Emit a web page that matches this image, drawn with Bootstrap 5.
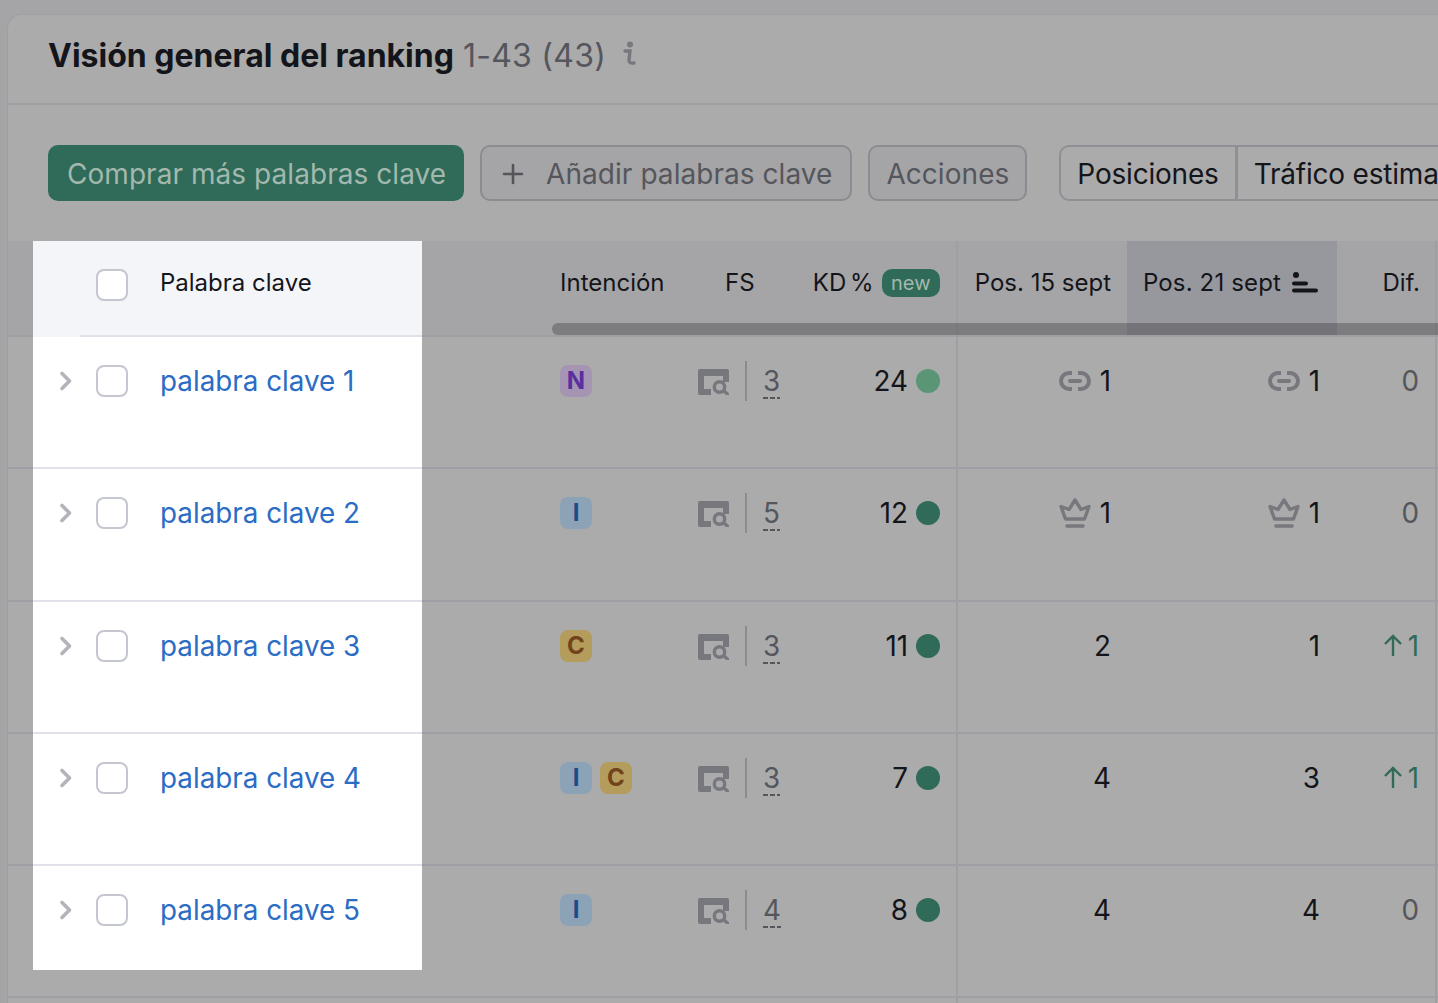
<!DOCTYPE html>
<html lang="es">
<head>
<meta charset="UTF-8">
<title>Visión general del ranking</title>
<link href="https://cdn.jsdelivr.net/npm/bootstrap@5.3.0/dist/css/bootstrap.min.css" rel="stylesheet">
<style>
    body {
        font-family: Inter, "Liberation Sans", sans-serif;
        background: #a5a5a7;
        overflow: hidden;
        height: 1003px;
        color: #14151a;
    }
    .page-wrap { padding: 14px 0 0 7px; width: 1600px; height: 1003px; overflow: hidden; position: relative; }
    .rank-card {
        background: #ababab;
        border: 0;
        border-left: 1px solid #9e9ea4;
        border-top: 1px solid #9e9ea4;
        border-radius: 14px 0 0 0;
    }
    .rank-head { height: 90px; padding: 0 0 7px 40px; border-bottom: 2px solid #9e9ea5; }
    .rank-title { font-size: 32px; font-weight: 700; }
    .rank-count { font-size: 32px; color: #55565c; font-weight: 400; margin-left: 9px; letter-spacing: .25px; }
    .info-mark { margin-left: 16px; margin-top: -4px; }
    .tool-bar { height: 136px; padding: 40px 0 0 40px; }
    .tool-btn {
        height: 56px;
        font-size: 28px;
        line-height: 1;
        letter-spacing: .05px;
        border-radius: 10px;
        padding: 2px 16px 0;
        color: #55565c;
        background: #a5a5a7;
        border: 2px solid #8b8c92;
        white-space: nowrap;
    }
    .tool-green { background: #2f6b58; border-color: #2f6b58; color: #a3b8ae; padding: 2px 16px 0 17px; }
    .tool-add { padding: 2px 18px 0 20px; }
    .tool-add svg { margin-right: 22px; }
    .tool-last { margin-right: 32px; }
    .tool-plain { background: transparent; color: #14151a; border-color: #8f9095; letter-spacing: -.2px; }
    .col-grid {
        display: grid;
        grid-template-columns: 544px 138px 110px 158px 169px 210px 100px 100px;
    }
    .head-row { height: 94px; background: #a5a5a7; font-size: 24px; position: relative; }
    .head-cell { display: flex; align-items: center; justify-content: flex-end; padding: 0 16px 11px 0; white-space: nowrap; }
    .head-active { background: #97989d; padding-right: 19px; letter-spacing: .15px; }
    .head-active svg { margin-left: 11px; }
    .head-intent { justify-content: flex-start; padding-left: 8px; }
    .head-fs { justify-content: flex-start; padding-left: 35px; }
    .head-dif { padding-right: 15px; }
    .kd-label { word-spacing: -3px; }
    .line-r { border-right: 2px solid #9e9ea5; }
    .scroll-thumb { position: absolute; left: 544px; right: 0; top: 82px; height: 12px; border-radius: 7px 0 0 7px; background: rgba(20, 21, 26, .28); }
    .new-tag {
        background: #2f6b58;
        color: #a3b8ae;
        font-size: 20px;
        line-height: 28px;
        border-radius: 10px;
        padding: 0 9.5px;
        margin-left: 8px;
    }
    .key-row { height: 132.25px; border-top: 2px solid #9e9ea5; font-size: 27.8px; line-height: 32px; }
    .key-cell { display: flex; align-items: flex-start; justify-content: flex-end; padding: 28px 16px 0 0; gap: 9px; }
    .pos-b { padding-right: 17px; }
    .intent-cell { justify-content: flex-start; padding-left: 8px; gap: 8px; }
    .intent-tag {
        width: 32px;
        height: 32px;
        border-radius: 8px;
        font-size: 24px;
        font-weight: 700;
        line-height: 32px;
        text-align: center;
    }
    .int-n { background: #a694b3; color: #5a2fa0; }
    .int-i { background: #8ca2b7; color: #1c4a8c; }
    .int-c { background: #b39c5c; color: #70431a; }
    .fs-cell { justify-content: flex-start; padding-left: 8px; gap: 0; }
    .fs-icon { width: 31px; height: 26px; margin-top: 4px; flex: none; }
    .fs-sep { width: 2px; height: 40px; background: #8b8c92; margin: -4px 16px 0; flex: none; }
    .fs-num {
        color: #55565c;
        height: 34px;
        background: repeating-linear-gradient(90deg, #55565c 0 5px, transparent 5px 7px) bottom / 100% 2px no-repeat;
    }
    .kd-dot { width: 24px; height: 24px; border-radius: 50%; background: #2f6b58; margin-top: 4px; margin-left: -1px; flex: none; }
    .kd-light { background: #5a9675; }
    .pos-icon { width: 32px; height: 32px; flex: none; }
    .dif-flat { color: #55565c; }
    .dif-up { color: #2f6b58; gap: 5px; }
    .spot-panel {
        position: absolute;
        left: 33px;
        top: 241px;
        width: 389px;
        height: 729px;
        background: #fff;
        overflow: hidden;
    }
    .spot-head { height: 94px; background: #f4f5f9; display: flex; align-items: center; padding: 0 0 11px 63px; font-size: 24px; position: relative; }
    .spot-head::after { content: ""; position: absolute; left: 47px; right: 0; bottom: -2px; height: 2px; background: #e0e1e9; }
    .spot-row { height: 132.25px; border-top: 2px solid #e0e1e9; display: flex; align-items: flex-start; padding-top: 28px; font-size: 27.8px; line-height: 32px; }
    .spot-head + .spot-row { border-top-color: #f4f5f9; }
    .spot-chev { width: 63px; height: 32px; flex: none; }
    .spot-check.form-check-input {
        width: 32px;
        height: 32px;
        margin: 0 32px 0 0;
        border: 2px solid #c4c7cf;
        border-radius: 8px;
        flex: none;
        float: none;
    }
    .spot-head .spot-check.form-check-input { margin-top: 4px; }
    .spot-link { color: #2b6cc4; text-decoration: none; white-space: nowrap; }
</style>
</head>
<body>
<svg width="0" height="0" class="position-absolute">
    <symbol id="ic-window" viewBox="0 0 31 26">
        <path fill="#77787d" d="M2 0h27a2 2 0 0 1 2 2v11h-6V7H6v13h7v6H2a2 2 0 0 1-2-2V2a2 2 0 0 1 2-2z"/>
        <circle cx="21.500" cy="18" r="5.200" fill="none" stroke="#77787d" stroke-width="3.400"/>
        <path d="M26 22l3.400 3" stroke="#77787d" stroke-width="3.400" stroke-linecap="round"/>
    </symbol>
    <symbol id="ic-link" viewBox="0 0 32 32">
        <path d="M13 8H10a8 8 0 0 0 0 16h3M19 8h3a8 8 0 0 1 0 16h-3" fill="none" stroke="#77787d" stroke-width="4"/>
        <path d="M11 16h10" stroke="#77787d" stroke-width="4" stroke-linecap="round"/>
    </symbol>
    <symbol id="ic-crown" viewBox="0 0 32 32">
        <path d="M16 3l6 9.500 8-3-4.500 12.500H6.500L2 9.500l8 3z" fill="none" stroke="#77787d" stroke-width="3.400" stroke-linejoin="round"/>
        <path d="M8 29h16" stroke="#77787d" stroke-width="3.600" stroke-linecap="round"/>
    </symbol>
    <symbol id="ic-chev" viewBox="0 0 63 32">
        <path d="M29 8.500l7.500 7.500-7.500 7.500" fill="none" stroke="#b2b3bb" stroke-width="3.600" stroke-linecap="round" stroke-linejoin="round"/>
    </symbol>
    <symbol id="ic-up" viewBox="0 0 20 24">
        <path d="M10 22V3M2 10l8-8 8 8" fill="none" stroke="#2f6b58" stroke-width="2.400"/>
    </symbol>
</svg>

<div class="page-wrap">
    <div class="card rank-card">
        <div class="rank-head d-flex align-items-center">
            <span class="rank-title">Visión general del ranking</span>
            <span class="rank-count">1-43 (43)</span>
            <svg class="info-mark" width="16" height="26" viewBox="0 0 16 26"><circle cx="8" cy="3.500" r="3" fill="#77787d"/><path d="M3 10h5l-1 9c-.2 2.500 1.500 3.500 5 3" fill="none" stroke="#77787d" stroke-width="3.400" stroke-linecap="round"/></svg>
        </div>
        <div class="tool-bar d-flex">
            <button class="btn tool-btn tool-green me-3">Comprar más palabras clave</button>
            <button class="btn tool-btn tool-add me-3 d-flex align-items-center">
                <svg width="22" height="22" viewBox="0 0 22 22"><path d="M11 2v18M2 11h18" stroke="#55565c" stroke-width="2.600" stroke-linecap="round"/></svg>Añadir palabras clave
            </button>
            <button class="btn tool-btn tool-last">Acciones</button>
            <div class="btn-group">
                <button class="btn tool-btn tool-plain">Posiciones</button>
                <button class="btn tool-btn tool-plain">Tráfico estimado</button>
            </div>
        </div>

        <div class="col-grid head-row">
            <div></div>
            <div class="head-cell head-intent">Intención</div>
            <div class="head-cell head-fs">FS</div>
            <div class="head-cell line-r"><span class="kd-label">KD %</span><span class="new-tag">new</span></div>
            <div class="head-cell">Pos. 15 sept</div>
            <div class="head-cell head-active">Pos. 21 sept
                <svg width="26" height="22" viewBox="0 0 26 22"><circle cx="4" cy="3" r="3" fill="#14151a"/><path d="M2 11.500h12M2 18.500h22" stroke="#14151a" stroke-width="4" stroke-linecap="round"/></svg>
            </div>
            <div class="head-cell head-dif line-r">Dif.</div>
            <div></div>
            <div class="scroll-thumb"></div>
        </div>

        <div class="col-grid key-row">
            <div></div>
            <div class="key-cell intent-cell"><span class="intent-tag int-n">N</span></div>
            <div class="key-cell fs-cell"><svg class="fs-icon"><use href="#ic-window"/></svg><span class="fs-sep"></span><span class="fs-num">3</span></div>
            <div class="key-cell line-r">24<span class="kd-dot kd-light"></span></div>
            <div class="key-cell"><svg class="pos-icon"><use href="#ic-link"/></svg>1</div>
            <div class="key-cell pos-b"><svg class="pos-icon"><use href="#ic-link"/></svg>1</div>
            <div class="key-cell line-r dif-flat">0</div>
            <div></div>
        </div>
        <div class="col-grid key-row">
            <div></div>
            <div class="key-cell intent-cell"><span class="intent-tag int-i">I</span></div>
            <div class="key-cell fs-cell"><svg class="fs-icon"><use href="#ic-window"/></svg><span class="fs-sep"></span><span class="fs-num">5</span></div>
            <div class="key-cell line-r">12<span class="kd-dot"></span></div>
            <div class="key-cell"><svg class="pos-icon"><use href="#ic-crown"/></svg>1</div>
            <div class="key-cell pos-b"><svg class="pos-icon"><use href="#ic-crown"/></svg>1</div>
            <div class="key-cell line-r dif-flat">0</div>
            <div></div>
        </div>
        <div class="col-grid key-row">
            <div></div>
            <div class="key-cell intent-cell"><span class="intent-tag int-c">C</span></div>
            <div class="key-cell fs-cell"><svg class="fs-icon"><use href="#ic-window"/></svg><span class="fs-sep"></span><span class="fs-num">3</span></div>
            <div class="key-cell line-r">11<span class="kd-dot"></span></div>
            <div class="key-cell">2</div>
            <div class="key-cell pos-b">1</div>
            <div class="key-cell line-r dif-up"><svg width="20" height="24" class="mt-1"><use href="#ic-up"/></svg>1</div>
            <div></div>
        </div>
        <div class="col-grid key-row">
            <div></div>
            <div class="key-cell intent-cell"><span class="intent-tag int-i">I</span><span class="intent-tag int-c">C</span></div>
            <div class="key-cell fs-cell"><svg class="fs-icon"><use href="#ic-window"/></svg><span class="fs-sep"></span><span class="fs-num">3</span></div>
            <div class="key-cell line-r">7<span class="kd-dot"></span></div>
            <div class="key-cell">4</div>
            <div class="key-cell pos-b">3</div>
            <div class="key-cell line-r dif-up"><svg width="20" height="24" class="mt-1"><use href="#ic-up"/></svg>1</div>
            <div></div>
        </div>
        <div class="col-grid key-row">
            <div></div>
            <div class="key-cell intent-cell"><span class="intent-tag int-i">I</span></div>
            <div class="key-cell fs-cell"><svg class="fs-icon"><use href="#ic-window"/></svg><span class="fs-sep"></span><span class="fs-num">4</span></div>
            <div class="key-cell line-r">8<span class="kd-dot"></span></div>
            <div class="key-cell">4</div>
            <div class="key-cell pos-b">4</div>
            <div class="key-cell line-r dif-flat">0</div>
            <div></div>
        </div>
        <div class="col-grid key-row">
            <div></div><div></div><div></div><div class="line-r"></div><div></div><div></div><div class="line-r"></div><div></div>
        </div>
    </div>

    <div class="spot-panel">
        <div class="spot-head"><input class="form-check-input spot-check" type="checkbox"><span>Palabra clave</span></div>
        <div class="spot-row"><svg class="spot-chev"><use href="#ic-chev"/></svg><input class="form-check-input spot-check" type="checkbox"><a class="spot-link" href="#">palabra clave 1</a></div>
        <div class="spot-row"><svg class="spot-chev"><use href="#ic-chev"/></svg><input class="form-check-input spot-check" type="checkbox"><a class="spot-link" href="#">palabra clave 2</a></div>
        <div class="spot-row"><svg class="spot-chev"><use href="#ic-chev"/></svg><input class="form-check-input spot-check" type="checkbox"><a class="spot-link" href="#">palabra clave 3</a></div>
        <div class="spot-row"><svg class="spot-chev"><use href="#ic-chev"/></svg><input class="form-check-input spot-check" type="checkbox"><a class="spot-link" href="#">palabra clave 4</a></div>
        <div class="spot-row"><svg class="spot-chev"><use href="#ic-chev"/></svg><input class="form-check-input spot-check" type="checkbox"><a class="spot-link" href="#">palabra clave 5</a></div>
    </div>
</div>
<script src="https://cdn.jsdelivr.net/npm/bootstrap@5.3.0/dist/js/bootstrap.bundle.min.js"></script>
</body>
</html>
